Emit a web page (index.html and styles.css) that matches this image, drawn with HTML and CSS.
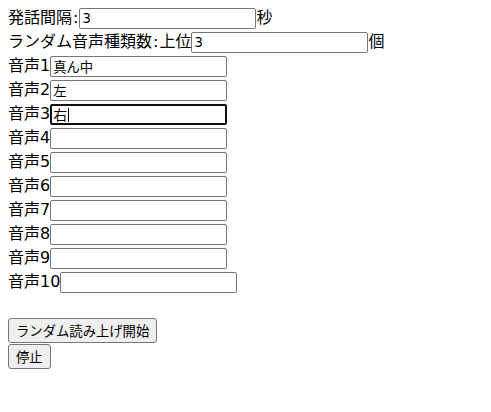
FILE: index.html
```html
<!DOCTYPE html>
<html lang="ja">
<head>
<meta charset="utf-8">
<link rel="stylesheet" href="styles.css">
</head>
<body>
<div class="row">発話間隔<span class="colon">:</span><input class="field" type="text" value="3">秒</div>
<div class="row">ランダム音声種類数<span class="colon">:</span>上位<input class="field" type="text" value="3">個</div>
<div class="row">音声1<input class="field" type="text" value="真ん中"></div>
<div class="row">音声2<input class="field" type="text" value="左"></div>
<div class="row">音声3<span class="field focused">右<span class="caret"></span></span></div>
<div class="row">音声4<input class="field" type="text"></div>
<div class="row">音声5<input class="field" type="text"></div>
<div class="row">音声6<input class="field" type="text"></div>
<div class="row">音声7<input class="field" type="text"></div>
<div class="row">音声8<input class="field" type="text"></div>
<div class="row">音声9<input class="field" type="text"></div>
<div class="row">音声10<input class="field" type="text"></div>
<div class="spacer"></div>
<div class="buttons">
<button class="btn" type="button">ランダム読み上げ開始</button>
<button class="btn" type="button">停止</button>
</div>
</body>
</html>
```
FILE: styles.css
```css
html, body {
  background: #ffffff;
}
body {
  margin: 8px;
  font-family: "DejaVu Sans", "Noto Sans CJK JP", sans-serif;
  font-size: 16px;
  color: #000000;
}
.row {
  display: flex;
  align-items: flex-start;
  height: 24px;
  line-height: 20px;
  white-space: nowrap;
}
.colon {
  padding: 0 1px;
}
.spacer {
  height: 22px;
}
.field {
  box-sizing: border-box;
  width: 177px;
  height: 21px;
  margin: 0;
  padding: 1px 2px;
  border: 1px solid #767676;
  border-radius: 2px;
  background: #ffffff;
  font-family: "DejaVu Sans", "Noto Sans CJK JP", sans-serif;
  font-size: 13.33px;
  color: #000000;
  outline: none;
}
.focused {
  display: flex;
  align-items: center;
  border: 2px solid #101010;
  padding: 0 1px;
  line-height: 1;
  font-size: 14px;
}
.caret {
  display: inline-block;
  width: 1px;
  height: 14px;
  background: #000000;
  margin-left: 1px;
}
.buttons {
  display: flex;
  flex-direction: column;
  align-items: flex-start;
  gap: 1px;
}
.btn {
  box-sizing: border-box;
  height: 25px;
  margin: 0;
  padding: 1px 7px;
  border: 1px solid #767676;
  border-radius: 3px;
  background: #efefef;
  font-family: "Noto Sans CJK JP", sans-serif;
  font-size: 13.33px;
  color: #000000;
  line-height: 1;
}
```
